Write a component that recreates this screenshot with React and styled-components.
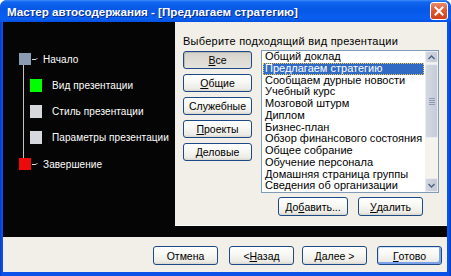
import React from 'react';
import styled, { createGlobalStyle, css } from 'styled-components';

const Global = createGlobalStyle`
  html, body { margin: 0; padding: 0; background: #fff; }
  body { font-family: "Liberation Sans", Arial, sans-serif; }
  * { box-sizing: border-box; }
`;

const Window = styled.div`
  width: 451px;
  height: 276px;
  background: linear-gradient(90deg, #0837c8 0, #0a52e8 2px, #0a52e8 449px, #0535c0 451px);
  border-radius: 7px 7px 0 0;
  display: flex;
  flex-direction: column;
  overflow: hidden;
`;

const TitleBar = styled.div`
  height: 22px;
  flex: none;
  display: flex;
  align-items: center;
  padding-left: 7px;
  padding-right: 3px;
  background: linear-gradient(180deg, #3d8dff 0, #1266ee 2px, #0658e6 40%, #0a5ff0 85%, #0650e0 100%);
`;

const Title = styled.div`
  flex: 1;
  color: #fff;
  font-weight: bold;
  font-size: 11.6px;
  text-shadow: 1px 1px 0 #0a2a8a;
  white-space: nowrap;
`;

const CloseBtn = styled.div`
  width: 18px;
  height: 18px;
  border: 1px solid #fff;
  border-radius: 3px;
  background: linear-gradient(180deg, #e98a6c 0%, #e0562e 50%, #d0401a 100%);
  display: flex;
  align-items: center;
  justify-content: center;
`;

const Body = styled.div`
  flex: 1;
  margin: 0 4px 4px 3px;
  display: flex;
  flex-direction: column;
  background: #f1efe7;
`;

const Main = styled.div`
  height: 215px;
  flex: none;
  display: flex;
  background: #050505;
`;

const StepsPanel = styled.div`
  width: 172px;
  overflow: hidden;
  padding-top: 24px;
`;

const StepsList = styled.div`
  position: relative;
  &::before {
    content: '';
    position: absolute;
    left: 20px;
    top: 19px;
    bottom: 19px;
    width: 1px;
    background: #c4c4c4;
  }
`;

const StepRow = styled.div`
  height: 26.25px;
  display: flex;
  align-items: center;
  padding-left: ${p => (p.$sub ? 27 : 16)}px;
`;

const Square = styled.div`
  width: 12px;
  height: ${p => (p.$sub ? 13 : 12)}px;
  flex: none;
  background: ${p => p.$color};
`;

const Tick = styled.svg`
  margin-left: 1px;
  flex: none;
`;

const StepLabel = styled.span`
  color: #fff;
  font-size: 10px;
  letter-spacing: 0.1px;
  white-space: nowrap;
  margin-left: ${p => (p.$sub ? 10 : 5)}px;
`;

const RightPanel = styled.div`
  width: 272px;
  height: 204px;
  background: #f1efe7;
  padding: 13px 0 0 8px;
  border-bottom: 1px solid #fbfbf8;
`;

const Label = styled.div`
  font-size: 11px;
  line-height: 13px;
  height: 13px;
  color: #000;
  letter-spacing: 0.25px;
  margin-bottom: 2px;
  white-space: nowrap;
`;

const Row = styled.div`
  display: flex;
  align-items: flex-start;
`;

const ButtonColumn = styled.div`
  width: 69px;
  display: flex;
  flex-direction: column;
  gap: 5px;
  padding-top: 1px;
`;

const XpButton = styled.div`
  width: ${p => p.$w}px;
  height: ${p => p.$h}px;
  flex: none;
  border: 1px solid #1c4a86;
  border-radius: 3px;
  display: flex;
  align-items: center;
  justify-content: center;
  font-size: 10.5px;
  color: #000;
  white-space: nowrap;
  background: linear-gradient(180deg, #ffffff 0%, #f7f7f3 45%, #ecebe5 85%, #d9d6cc 100%);
  ${p => p.$pressed && css`
    background: linear-gradient(180deg, #d3d1c9 0%, #dcdad3 40%, #e4e2dc 100%);
    box-shadow: inset 1px 1px 0 #bcb9b0;
  `}
  ${p => p.$default && css`
    box-shadow: inset -2px -2px 0 #7ea2ea, inset 1px 1px 0 #cfe0fc;
  `}
  u { text-decoration: underline; text-underline-offset: 1px; }
`;

const ListColumn = styled.div`
  margin-left: 9px;
  display: flex;
  flex-direction: column;
`;

const ListBox = styled.div`
  width: 178px;
  height: 143px;
  border: 1px solid #7f9db9;
  background: #fff;
  display: flex;
`;

const Items = styled.div`
  flex: 1;
  padding: 0 1px 0 1px;
  overflow: hidden;
`;

const Item = styled.div`
  height: 11.75px;
  line-height: 11.75px;
  font-size: 11px;
  padding-left: 2px;
  white-space: nowrap;
  color: #000;
  ${p => p.$selected && css`
    background: #316ac5;
    color: #fff;
    outline: 1px dotted #f2c84b;
    outline-offset: -1px;
  `}
`;

const Scrollbar = styled.div`
  width: 13px;
  flex: none;
  display: flex;
  flex-direction: column;
  background: #f4f3ee;
`;

const ScrollBtn = styled.div`
  height: ${p => p.$h}px;
  flex: none;
  background: linear-gradient(90deg, #d2d6df, #c4cad6);
  border: 1px solid #e8ebf2;
  border-radius: 2px;
  display: flex;
  align-items: center;
  justify-content: center;
`;

const Thumb = styled.div`
  height: 74px;
  margin-top: 1px;
  flex: none;
  background: linear-gradient(90deg, #d4d8e0, #c6ccd8);
  border: 1px solid #e8ebf2;
  border-radius: 2px;
  display: flex;
  align-items: center;
  justify-content: center;
`;

const Track = styled.div`
  flex: 1;
`;

const Actions = styled.div`
  display: flex;
  justify-content: center;
  gap: 10px;
  margin-top: 4px;
  padding-left: 1px;
`;

const Footer = styled.div`
  flex: 1;
  display: flex;
  justify-content: flex-end;
  align-items: flex-start;
  padding: 9px 5px 0 0;
`;

const FooterSlot = styled.div`
  margin-left: ${p => p.$gap}px;
`;

const TickIcon = () => (
  <Tick width="6" height="6" viewBox="0 0 6 6">
    <path d="M0 3.5 H4 L5.5 2" stroke="#d8d8d8" strokeWidth="1" fill="none" />
  </Tick>
);

const items = [
  'Общий доклад',
  'Предлагаем стратегию',
  'Сообщаем дурные новости',
  'Учебный курс',
  'Мозговой штурм',
  'Диплом',
  'Бизнес-план',
  'Обзор финансового состояния',
  'Общее собрание',
  'Обучение персонала',
  'Домашняя страница группы',
  'Сведения об организации',
];

export default function App() {
  return (
    <>
      <Global />
      <Window>
        <TitleBar>
          <Title>Мастер автосодержания - [Предлагаем стратегию]</Title>
          <CloseBtn>
            <svg width="10" height="10" viewBox="0 0 10 10">
              <path d="M1.5 1.5 L8.5 8.5 M8.5 1.5 L1.5 8.5" stroke="#fff" strokeWidth="2" strokeLinecap="square" />
            </svg>
          </CloseBtn>
        </TitleBar>
        <Body>
          <Main>
            <StepsPanel>
              <StepsList>
                <StepRow>
                  <Square $color="#8a9bb2" />
                  <TickIcon />
                  <StepLabel>Начало</StepLabel>
                </StepRow>
                <StepRow $sub>
                  <Square $sub $color="#00ff00" />
                  <StepLabel $sub>Вид презентации</StepLabel>
                </StepRow>
                <StepRow $sub>
                  <Square $sub $color="#d6d8dd" />
                  <StepLabel $sub>Стиль презентации</StepLabel>
                </StepRow>
                <StepRow $sub>
                  <Square $sub $color="#d6d8dd" />
                  <StepLabel $sub>Параметры презентации</StepLabel>
                </StepRow>
                <StepRow>
                  <Square $color="#ee0a0a" />
                  <TickIcon />
                  <StepLabel>Завершение</StepLabel>
                </StepRow>
              </StepsList>
            </StepsPanel>
            <RightPanel>
              <Label>Выберите подходящий вид презентации</Label>
              <Row>
                <ButtonColumn>
                  <XpButton $w={69} $h={18} $pressed><u>В</u>се</XpButton>
                  <XpButton $w={69} $h={18}><u>О</u>бщие</XpButton>
                  <XpButton $w={69} $h={18}>Служебные</XpButton>
                  <XpButton $w={69} $h={18}><u>П</u>роекты</XpButton>
                  <XpButton $w={69} $h={18}><u>Д</u>еловые</XpButton>
                </ButtonColumn>
                <ListColumn>
                  <ListBox>
                    <Items>
                      {items.map((t, i) => (
                        <Item key={t} $selected={i === 1}>{t}</Item>
                      ))}
                    </Items>
                    <Scrollbar>
                      <ScrollBtn $h={12}>
                        <svg width="7" height="5" viewBox="0 0 7 5">
                          <path d="M0.5 4 L3.5 1 L6.5 4" stroke="#4d6185" strokeWidth="1.4" fill="none" />
                        </svg>
                      </ScrollBtn>
                      <Thumb>
                        <svg width="6" height="7" viewBox="0 0 6 7">
                          <path d="M0 0.5 H6 M0 2.5 H6 M0 4.5 H6 M0 6.5 H6" stroke="#8c9ab8" strokeWidth="1" />
                        </svg>
                      </Thumb>
                      <Track />
                      <ScrollBtn $h={14}>
                        <svg width="7" height="5" viewBox="0 0 7 5">
                          <path d="M0.5 1 L3.5 4 L6.5 1" stroke="#4d6185" strokeWidth="1.4" fill="none" />
                        </svg>
                      </ScrollBtn>
                    </Scrollbar>
                  </ListBox>
                  <Actions>
                    <XpButton $w={70} $h={19}>До<u>б</u>авить...</XpButton>
                    <XpButton $w={65} $h={19}><u>У</u>далить</XpButton>
                  </Actions>
                </ListColumn>
              </Row>
            </RightPanel>
          </Main>
          <Footer>
            <FooterSlot $gap={0}><XpButton $w={65} $h={19}>Отмена</XpButton></FooterSlot>
            <FooterSlot $gap={11}><XpButton $w={65} $h={19}>&lt; <u>Н</u>азад</XpButton></FooterSlot>
            <FooterSlot $gap={8}><XpButton $w={65} $h={19}><u>Д</u>алее &gt;</XpButton></FooterSlot>
            <FooterSlot $gap={10}><XpButton $w={65} $h={19} $default><u>Г</u>отово</XpButton></FooterSlot>
          </Footer>
        </Body>
      </Window>
    </>
  );
}
